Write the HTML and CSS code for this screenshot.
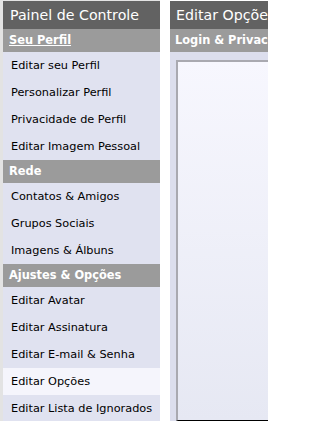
FILE: index.html
```html
<!DOCTYPE html>
<html lang="pt">
<head>
<meta charset="utf-8">
<title>Painel de Controle</title>
<link rel="stylesheet" href="styles.css">
</head>
<body>
<div class="page">
  <nav class="sidebar">
    <div class="title">Painel de Controle</div>
    <div class="section"><a href="#" class="section-link">Seu Perfil</a></div>
    <div class="item">Editar seu Perfil</div>
    <div class="item">Personalizar Perfil</div>
    <div class="item">Privacidade de Perfil</div>
    <div class="item">Editar Imagem Pessoal</div>
    <div class="section">Rede</div>
    <div class="item">Contatos &amp; Amigos</div>
    <div class="item">Grupos Sociais</div>
    <div class="item">Imagens &amp; Álbuns</div>
    <div class="section">Ajustes &amp; Opções</div>
    <div class="item">Editar Avatar</div>
    <div class="item">Editar Assinatura</div>
    <div class="item">Editar E-mail &amp; Senha</div>
    <div class="item active">Editar Opções</div>
    <div class="item">Editar Lista de Ignorados</div>
  </nav>
  <main class="content">
    <div class="title main-title">Editar Opções</div>
    <div class="section main-section">Login &amp; Privacidade</div>
    <div class="panel">
      <div class="box"></div>
    </div>
  </main>
</div>
</body>
</html>
```

FILE: styles.css
```css
html, body {
  margin: 0;
  padding: 0;
  background: #ffffff;
  overflow: hidden;
  width: 268px;
  height: 421px;
}

body {
  font-family: "DejaVu Sans", Verdana, sans-serif;
  color: #000000;
}

.page {
  display: flex;
  gap: 10px;
  width: 268px;
  height: 421px;
  overflow: hidden;
}

.sidebar {
  flex: 0 0 157px;
  border-left: 3px solid #e3e3e3;
  border-top: 1px solid #e3e3e3;
  background: #e0e2f0;
  white-space: nowrap;
  overflow: hidden;
}

.title {
  height: 28px;
  line-height: 28px;
  background: #626262;
  color: #ffffff;
  font-size: 14.2px;
  padding-left: 7px;
  white-space: nowrap;
  overflow: hidden;
}

.section {
  height: 23px;
  line-height: 23px;
  background: #9b9b9b;
  color: #ffffff;
  font-weight: bold;
  font-size: 11.4px;
  padding-left: 6px;
  white-space: nowrap;
  overflow: hidden;
}

.section-link {
  color: #ffffff;
  text-decoration: underline;
}

.item {
  height: 27px;
  line-height: 28px;
  font-size: 11.3px;
  padding-left: 8px;
  background: #e0e2f0;
  white-space: nowrap;
  overflow: hidden;
}

.item.active {
  background: #f5f5fc;
}

.content {
  flex: 1 1 auto;
  min-width: 0;
  display: flex;
  flex-direction: column;
  margin-top: 1px;
  overflow: hidden;
}

.main-title {
  padding-left: 6px;
}

.main-section {
  padding-left: 5px;
}

.panel {
  flex: 1;
  background: #dcdeed;
  padding: 8px 0 0 6px;
}

.box {
  height: 358px;
  border-top: 2px solid #a9a9b0;
  border-left: 2px solid #a9a9b0;
  border-bottom: 1px solid #000000;
  background: linear-gradient(#f7f7fe, #e6e8f3);
}
```
